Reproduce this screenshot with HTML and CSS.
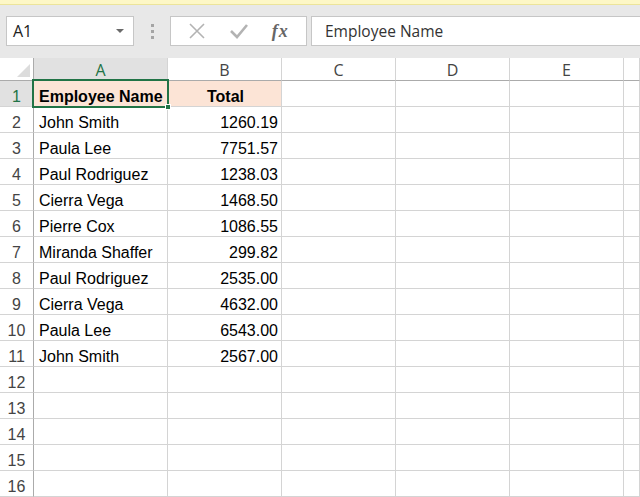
FILE: index.html
```html
<!DOCTYPE html>
<html>
<head>
<meta charset="utf-8">
<link rel="stylesheet" href="styles.css">
</head>
<body>
<div class="app">
  <div class="msgbar"></div>
  <div class="toolbar">
    <div class="namebox">
      <span class="nb-text">A1</span>
      <span class="nb-caret"></span>
    </div>
    <div class="grip"><span></span><span></span><span></span></div>
    <div class="fbuttons">
      <svg class="ico" width="18" height="18" viewBox="0 0 18 18"><path d="M2 2 L16 16 M16 2 L2 16" stroke="#b3b3b3" stroke-width="1.6" fill="none"/></svg>
      <svg class="ico" width="20" height="18" viewBox="0 0 20 18"><path d="M2 9 L8 15 L18 3" stroke="#b3b3b3" stroke-width="2.6" fill="none"/></svg>
      <span class="fx">fx</span>
    </div>
    <div class="finput">Employee Name</div>
  </div>
  <div class="sheet">
    <div class="hdr corner"><span class="tri"></span></div>
    <div class="hdr col sel">A</div>
    <div class="hdr col">B</div>
    <div class="hdr col">C</div>
    <div class="hdr col">D</div>
    <div class="hdr col">E</div>
    <div class="hdr col"></div>

    <div class="rh sel">1</div>
    <div class="c bold peach active">Employee Name<span class="selbox"><span class="handle"></span></span></div>
    <div class="c bold peach center">Total</div>
    <div class="c"></div><div class="c"></div><div class="c"></div><div class="c"></div>

    <div class="rh">2</div><div class="c">John Smith</div><div class="c num">1260.19</div><div class="c"></div><div class="c"></div><div class="c"></div><div class="c"></div>
    <div class="rh">3</div><div class="c">Paula Lee</div><div class="c num">7751.57</div><div class="c"></div><div class="c"></div><div class="c"></div><div class="c"></div>
    <div class="rh">4</div><div class="c">Paul Rodriguez</div><div class="c num">1238.03</div><div class="c"></div><div class="c"></div><div class="c"></div><div class="c"></div>
    <div class="rh">5</div><div class="c">Cierra Vega</div><div class="c num">1468.50</div><div class="c"></div><div class="c"></div><div class="c"></div><div class="c"></div>
    <div class="rh">6</div><div class="c">Pierre Cox</div><div class="c num">1086.55</div><div class="c"></div><div class="c"></div><div class="c"></div><div class="c"></div>
    <div class="rh">7</div><div class="c">Miranda Shaffer</div><div class="c num">299.82</div><div class="c"></div><div class="c"></div><div class="c"></div><div class="c"></div>
    <div class="rh">8</div><div class="c">Paul Rodriguez</div><div class="c num">2535.00</div><div class="c"></div><div class="c"></div><div class="c"></div><div class="c"></div>
    <div class="rh">9</div><div class="c">Cierra Vega</div><div class="c num">4632.00</div><div class="c"></div><div class="c"></div><div class="c"></div><div class="c"></div>
    <div class="rh">10</div><div class="c">Paula Lee</div><div class="c num">6543.00</div><div class="c"></div><div class="c"></div><div class="c"></div><div class="c"></div>
    <div class="rh">11</div><div class="c">John Smith</div><div class="c num">2567.00</div><div class="c"></div><div class="c"></div><div class="c"></div><div class="c"></div>
    <div class="rh">12</div><div class="c"></div><div class="c"></div><div class="c"></div><div class="c"></div><div class="c"></div><div class="c"></div>
    <div class="rh">13</div><div class="c"></div><div class="c"></div><div class="c"></div><div class="c"></div><div class="c"></div><div class="c"></div>
    <div class="rh">14</div><div class="c"></div><div class="c"></div><div class="c"></div><div class="c"></div><div class="c"></div><div class="c"></div>
    <div class="rh">15</div><div class="c"></div><div class="c"></div><div class="c"></div><div class="c"></div><div class="c"></div><div class="c"></div>
    <div class="rh">16</div><div class="c"></div><div class="c"></div><div class="c"></div><div class="c"></div><div class="c"></div><div class="c"></div>
  </div>
</div>
</body>
</html>
```
FILE: styles.css
```css
* { box-sizing: border-box; }
html, body { margin: 0; padding: 0; }
body {
  width: 640px;
  height: 497px;
  overflow: hidden;
  background: #ffffff;
  font-family: "Liberation Sans", Arial, sans-serif;
}
.app { width: 640px; height: 497px; overflow: hidden; }
.msgbar {
  height: 5px;
  background: #fdf7c6;
  border-bottom: 1px solid #ece49a;
}
.toolbar {
  height: 53px;
  background: #e8e8e8;
  display: flex;
  align-items: flex-start;
  padding: 11px 0 0 6px;
}
.namebox {
  width: 128px;
  height: 30px;
  background: #fff;
  border: 1px solid #c6c6c6;
  display: flex;
  align-items: center;
  justify-content: space-between;
  padding: 0 9px 0 6px;
  font-family: "Open Sans", "Noto Sans", sans-serif;
  font-size: 16px;
  color: #222;
}
.nb-caret {
  width: 0; height: 0;
  border-left: 4px solid transparent;
  border-right: 4px solid transparent;
  border-top: 4px solid #6a6a6a;
}
.grip {
  width: 36px;
  height: 30px;
  display: flex;
  flex-direction: column;
  align-items: center;
  justify-content: center;
  gap: 3px;
}
.grip span { width: 3px; height: 3px; background: #a4a4a4; }
.fbuttons {
  width: 137px;
  height: 30px;
  background: #fff;
  border: 1px solid #c6c6c6;
  display: flex;
  align-items: center;
  justify-content: space-around;
  padding: 0 6px 0 6px;
}
.fx {
  font-family: "Liberation Serif", serif;
  font-style: italic;
  font-weight: bold;
  font-size: 18px;
  color: #666;
  letter-spacing: 1px;
}
.finput {
  flex: 1;
  margin-left: 4px;
  height: 30px;
  background: #fff;
  border: 1px solid #c6c6c6;
  border-right: none;
  padding-left: 13px;
  display: flex;
  align-items: center;
  font-family: "Open Sans", "Noto Sans", sans-serif;
  font-size: 15.5px;
  color: #333;
}
.sheet {
  display: grid;
  grid-template-columns: 34px 134px 114px 114px 114px 114px 16px;
  grid-template-rows: 23px repeat(16, 26px);
}
.hdr {
  background: #fff;
  border-right: 1px solid #d4d4d4;
  border-bottom: 1px solid #ababab;
  font-family: "Open Sans", "Noto Sans", sans-serif;
  font-size: 16px;
  color: #444;
  display: flex;
  align-items: center;
  justify-content: center;
  padding-top: 1px;
}
.hdr.corner { border-right: 1px solid #ababab; position: relative; }
.tri {
  position: absolute;
  right: 3px; bottom: 3px;
  width: 0; height: 0;
  border-left: 13px solid transparent;
  border-bottom: 13px solid #dcdcdc;
}
.hdr.sel { background: #e1e1e1; color: #217346; }
.rh {
  border-right: 1px solid #ababab;
  border-bottom: 1px solid #d4d4d4;
  font-size: 16px;
  color: #444;
  text-align: center;
  padding-top: 6px;
  line-height: 20px;
}
.rh.sel { background: #e1e1e1; color: #217346; }
.c {
  border-right: 1px solid #d4d4d4;
  border-bottom: 1px solid #d4d4d4;
  font-size: 16px;
  color: #000;
  padding: 6px 3px 0 5px;
  line-height: 20px;
  white-space: nowrap;
  overflow: visible;
}
.c.bold { font-weight: bold; }
.c.peach { background: #fce4d6; }
.c.center { text-align: center; }
.c.num { text-align: right; }
.c.active { position: relative; }
.selbox {
  position: absolute;
  left: -2px; top: -2px;
  right: -2px; bottom: -2px;
  border: 2px solid #217346;
}
.handle {
  position: absolute;
  right: -4px; bottom: -4px;
  width: 6px; height: 6px;
  background: #217346;
  border: 1px solid #fff;
}
```
